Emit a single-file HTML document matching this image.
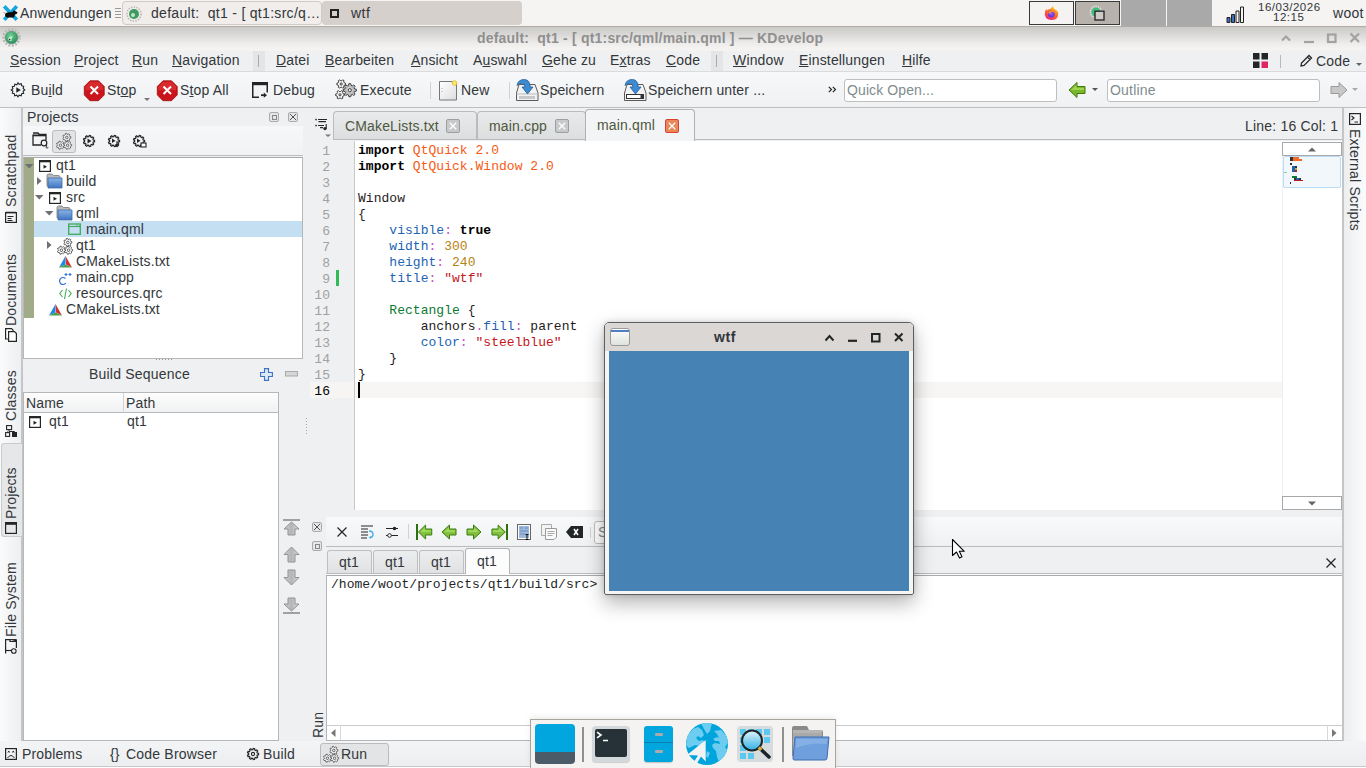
<!DOCTYPE html>
<html><head><meta charset="utf-8">
<style>
*{box-sizing:border-box;margin:0;padding:0}
html,body{width:1366px;height:768px;overflow:hidden;background:#eff0f1;font-family:"Liberation Sans",sans-serif;font-size:14px;color:#33373a}
.a{position:absolute}
.t{position:absolute;white-space:pre;line-height:16px;letter-spacing:0.15px}
.u{text-decoration:underline;text-underline-offset:1px}
.mono{font-family:"Liberation Mono",monospace;font-size:13px;letter-spacing:0.03px}
svg{position:absolute;overflow:visible}
</style></head><body>
<!-- TASKBAR -->
<div class="a" style="left:0;top:0;width:1366px;height:27px;background:#f5f4f2;border-bottom:1px solid #b3aba4"></div>
<svg style="left:2px;top:4px" width="17" height="18" viewBox="0 0 17 18"><path d="M2.2 2.2L14.8 15.8M14.8 2.2L2.2 15.8" stroke="#13a6df" stroke-width="3.6"/><path d="M3 11Q3.3 8.3 7 8.3L10.5 8L11.8 6.2L13 7L15.5 8.3L14.8 9.8L12.8 10.8L12 13.5L6.5 13.6Q3.4 13.6 3 11Z" fill="#0a0a0a"/><path d="M1.5 8.5L3.5 9.3" stroke="#555" stroke-width=".6"/></svg>
<div class="t" style="left:20px;top:5px;letter-spacing:0.2px;color:#31363b">Anwendungen</div>
<svg style="left:115px;top:8px" width="6" height="11"><path d="M0 .5H6M0 3.5H6M0 6.5H6M0 9.5H6" stroke="#999" stroke-width="1"/></svg>
<div class="a" style="left:122px;top:1px;width:200px;height:24px;background:#f0edea;border:1px solid #cfcac5;border-radius:4px"></div>
<svg style="left:126px;top:6px" width="16" height="16" viewBox="0 0 16 16"><circle cx="8" cy="8" r="7" fill="none" stroke="#bbb" stroke-width="1.6" stroke-dasharray="1.5 1.2"/><circle cx="8" cy="8" r="5" fill="#3e9a5f"/><circle cx="7" cy="9" r="2" fill="#bfe6c9"/></svg>
<div class="t" style="left:151px;top:5px;letter-spacing:0.3px;color:#31363b">default:  qt1 - [ qt1:src/q…</div>
<div class="a" style="left:322px;top:1px;width:200px;height:24px;background:#d5d0cc;border-radius:4px"></div>
<div class="a" style="left:330px;top:9px;width:9px;height:9px;border:2px solid #222"></div>
<div class="t" style="left:351px;top:5px;letter-spacing:0.5px;color:#31363b">wtf</div>
<div class="a" style="left:1029px;top:1px;width:45px;height:24px;background:#f5f3f1;border:1px solid #3a3a3a"></div>
<svg style="left:1044px;top:5px" width="15" height="16" viewBox="0 0 15 16"><defs><linearGradient id="gff" x1=".8" y1="0" x2=".3" y2="1"><stop offset="0" stop-color="#ffd91a"/><stop offset=".45" stop-color="#ff7a2a"/><stop offset="1" stop-color="#ef1f7a"/></linearGradient><radialGradient id="gfp" cx=".5" cy=".4" r=".6"><stop offset="0" stop-color="#9a5cff"/><stop offset="1" stop-color="#5a2fd0"/></radialGradient></defs><path d="M9.5 1Q9 3 10 3.8Q14.5 5.5 14.2 9.5Q13.8 15 7.5 15Q1 15 .8 8.8Q.8 5.5 2.5 3.8L3 5.5Q4.5 3.5 6.5 3.7Q8 1.5 9.5 1Z" fill="url(#gff)"/><circle cx="7.3" cy="9" r="3.4" fill="url(#gfp)"/><path d="M4 8Q5 5 8.5 5.5Q10.5 6.3 10.5 8.3Q9.5 6.8 7.5 7Q6 7.3 6.8 8.5Q5 9 4 8Z" fill="#ff8a2a"/></svg>
<div class="a" style="left:1075px;top:1px;width:45px;height:24px;background:#b8b2ad;border:1px solid #3a3a3a"></div>
<svg style="left:1089px;top:5px" width="18" height="17" viewBox="0 0 18 17"><circle cx="7" cy="7" r="5.6" fill="none" stroke="#e4e1de" stroke-width="1.6" stroke-dasharray="1.3 1"/><circle cx="7" cy="7" r="4.5" fill="#3fbf7a"/><rect x="6" y="6.2" width="9" height="8.8" fill="#cfcac6" stroke="#2a2c2e" stroke-width="1.4"/></svg>
<div class="a" style="left:1121px;top:0;width:45px;height:26px;background:#a9a9a9"></div>
<div class="a" style="left:1167px;top:0;width:45px;height:26px;background:#a9a9a9"></div>
<svg style="left:1226px;top:6px" width="18" height="17" viewBox="0 0 18 17"><path d="M1 11.5h3v5h-3z M5.5 8.5h3v8h-3z" fill="#3b6fc2" stroke="#222" stroke-width="1"/><path d="M10 5h3v11.5h-3z M14.5 1h3v15.5h-3z" fill="#f5f3f1" stroke="#222" stroke-width="1"/></svg>
<div class="t" style="left:1258px;top:1px;font-size:11.5px;letter-spacing:0.5px;color:#31363b;line-height:13px">16/03/2026</div>
<div class="t" style="left:1273px;top:11px;font-size:11.5px;letter-spacing:0.5px;color:#31363b;line-height:13px">12:15</div>
<div class="t" style="left:1333px;top:5px;letter-spacing:0.3px;color:#31363b">woot</div>

<!-- TITLE BAR -->
<div class="a" style="left:0;top:27px;width:1366px;height:24px;background:linear-gradient(#c9c9c7,#dcdbd9 35%,#eeedeb 70%,#f4f3f1 90%)"></div>
<svg style="left:2px;top:28px" width="19" height="19" viewBox="0 0 19 19"><defs><radialGradient id="gkd" cx=".4" cy=".35" r=".7"><stop offset="0" stop-color="#6fd08f"/><stop offset="1" stop-color="#2a8a5a"/></radialGradient></defs><circle cx="9.5" cy="9.5" r="8" fill="none" stroke="#b9b9b9" stroke-width="2.6" stroke-dasharray="2 1.4"/><circle cx="9.5" cy="9.5" r="6.3" fill="url(#gkd)" stroke="#4a7a66" stroke-width=".5"/><path d="M6 11.5Q7 7.5 11 8.5Q9 10 9.5 13Q7 13.5 6 11.5Z" fill="#c5ecd2"/><circle cx="7.6" cy="11.6" r=".8" fill="#222"/></svg>
<div class="t" style="left:477px;top:30px;font-weight:bold;color:#8f8f8f;font-size:14px;letter-spacing:0.2px">default:  qt1 - [ qt1:src/qml/main.qml ] — KDevelop</div>
<svg style="left:1280px;top:32px" width="82" height="12"><path d="M2 8.5L6 4.5L10 8.5" stroke="#a2a2a2" stroke-width="2.2" fill="none"/><path d="M24 10H34" stroke="#a2a2a2" stroke-width="2.2"/><rect x="48" y="2.5" width="7.5" height="7.5" stroke="#a2a2a2" stroke-width="2.2" fill="none"/><path d="M70.5 1.5L79 10M79 1.5L70.5 10" stroke="#a2a2a2" stroke-width="2.2"/></svg>

<!-- MENU BAR -->
<div class="a" style="left:0;top:51px;width:1366px;height:21px;background:#eff0f1;border-bottom:1px solid #d9dbdd"></div>
<div class="a" style="left:253px;top:51px;width:12px;height:20px;background:#e3e5e7"></div>
<div class="a" style="left:258px;top:55px;width:1px;height:12px;background:#a8aaac"></div>
<div class="a" style="left:711px;top:51px;width:12px;height:20px;background:#e3e5e7"></div>
<div class="a" style="left:716px;top:55px;width:1px;height:12px;background:#a8aaac"></div>
<div class="t" style="left:10px;top:52px"><span class="u">S</span>ession</div>
<div class="t" style="left:74px;top:52px"><span class="u">P</span>roject</div>
<div class="t" style="left:132px;top:52px"><span class="u">R</span>un</div>
<div class="t" style="left:172px;top:52px"><span class="u">N</span>avigation</div>
<div class="t" style="left:276px;top:52px"><span class="u">D</span>atei</div>
<div class="t" style="left:325px;top:52px"><span class="u">B</span>earbeiten</div>
<div class="t" style="left:411px;top:52px"><span class="u">A</span>nsicht</div>
<div class="t" style="left:473px;top:52px">A<span class="u">u</span>swahl</div>
<div class="t" style="left:542px;top:52px"><span class="u">G</span>ehe zu</div>
<div class="t" style="left:610px;top:52px">E<span class="u">x</span>tras</div>
<div class="t" style="left:666px;top:52px"><span class="u">C</span>ode</div>
<div class="t" style="left:733px;top:52px"><span class="u">W</span>indow</div>
<div class="t" style="left:799px;top:52px"><span class="u">E</span>instellungen</div>
<div class="t" style="left:902px;top:52px"><span class="u">H</span>ilfe</div>
<svg style="left:1253px;top:53px" width="16" height="16"><rect x="0" y="0" width="6.5" height="6.5" fill="#232627"/><rect x="8.5" y="0" width="6.5" height="6.5" fill="#232627"/><rect x="0" y="8.5" width="6.5" height="6.5" fill="#232627"/><rect x="8.5" y="8.5" width="6.5" height="6.5" fill="#e0245e"/></svg>
<div class="a" style="left:1280px;top:55px;width:1px;height:13px;background:#b8babc"></div>
<svg style="left:1299px;top:54px" width="14" height="14" viewBox="0 0 14 14"><path d="M2 12L2.5 9L10 1.5L12.5 4L5 11.5Z M8.5 3L11 5.5" stroke="#232627" stroke-width="1.3" fill="none"/></svg>
<div class="t" style="left:1316px;top:53px">Code</div>
<svg style="left:1356px;top:63px" width="8" height="5"><path d="M0 0H6L3 3Z" fill="#666"/></svg>

<!-- TOOLBAR -->
<div class="a" style="left:0;top:72px;width:1366px;height:36px;background:linear-gradient(#f7f8f9,#eff1f2);border-bottom:1px solid #bcbec0"></div>
<svg style="left:10px;top:82px" width="16" height="16" viewBox="0 0 16 16"><path d="M8 .8l1.3 1.6 2-.6.4 2 2 .5-.6 2L14.8 8l-1.7 1.3.6 2-2 .4-.5 2-2-.6L8 14.8l-1.3-1.7-2 .6-.4-2-2-.5.6-2L1.2 8l1.7-1.3-.6-2 2-.4.5-2 2 .6Z" fill="none" stroke="#232627" stroke-width="1.1"/><path d="M6.3 5.2L10.8 8L6.3 10.8Z" fill="#232627"/></svg>
<div class="t" style="left:31px;top:82px">Bu<span class="u">i</span>ld</div>
<svg style="left:84px;top:80px" width="21" height="21" viewBox="0 0 21 21"><path d="M6 .8h8.5l5.7 5.7v8.5L14.5 20.7H6L.3 15V6.5Z" fill="#c9151b" stroke="#9c0d10" stroke-width=".8"/><path d="M6.3 1.8h7.9l5 5v3.5H1.3V6.8Z" fill="#e23a3a" opacity=".6"/><path d="M6.5 6.5L14 14M14 6.5L6.5 14" stroke="#fff" stroke-width="2"/></svg>
<div class="t" style="left:107px;top:82px">St<span class="u">o</span>p</div>
<svg style="left:144px;top:98px" width="7" height="4"><path d="M0 0H6L3 3Z" fill="#777"/></svg>
<svg style="left:157px;top:80px" width="21" height="21" viewBox="0 0 21 21"><path d="M6 .8h8.5l5.7 5.7v8.5L14.5 20.7H6L.3 15V6.5Z" fill="#c9151b" stroke="#9c0d10" stroke-width=".8"/><path d="M6.3 1.8h7.9l5 5v3.5H1.3V6.8Z" fill="#e23a3a" opacity=".6"/><path d="M6.5 6.5L14 14M14 6.5L6.5 14" stroke="#fff" stroke-width="2"/></svg>
<div class="t" style="left:180px;top:82px">S<span class="u">t</span>op All</div>
<svg style="left:252px;top:82px" width="16" height="16" viewBox="0 0 16 16"><rect x="0" y="0" width="16" height="3.2" fill="#232627"/><path d="M.75 3V15.25H7M15.25 3V10.5" fill="none" stroke="#232627" stroke-width="1.5"/><path d="M9 13.2H12.5" stroke="#232627" stroke-width="1.8"/><path d="M11.8 10.6L15 13.2L11.8 15.8Z" fill="#232627"/></svg>
<div class="t" style="left:273px;top:82px">Debug</div>
<svg style="left:335px;top:79px" width="22" height="21" viewBox="0 0 22 21"><defs><radialGradient id="gex" cx=".5" cy=".5" r=".6"><stop offset="0" stop-color="#f0f0f0"/><stop offset=".5" stop-color="#b8b8b8"/><stop offset="1" stop-color="#e6e6e6"/></radialGradient></defs><g stroke="#2a2a2a" stroke-width=".9" stroke-linejoin="round" fill-rule="evenodd"><path d="M10.52 4.18L10.52 5.82L9.32 6.09L8.70 7.16L9.08 8.33L7.65 9.16L6.82 8.24L5.58 8.24L4.75 9.16L3.32 8.33L3.70 7.16L3.08 6.09L1.88 5.82L1.88 4.18L3.08 3.91L3.70 2.84L3.32 1.67L4.75 0.84L5.58 1.76L6.82 1.76L7.65 0.84L9.08 1.67L8.70 2.84L9.32 3.91ZM7.30 5.00A1.1 1.1 0 1 0 5.10 5.00A1.1 1.1 0 1 0 7.30 5.00Z" fill="#f6f6f6"/><path d="M9.32 14.98L9.32 16.62L8.12 16.89L7.50 17.96L7.88 19.13L6.45 19.96L5.62 19.04L4.38 19.04L3.55 19.96L2.12 19.13L2.50 17.96L1.88 16.89L0.68 16.62L0.68 14.98L1.88 14.71L2.50 13.64L2.12 12.47L3.55 11.64L4.38 12.56L5.62 12.56L6.45 11.64L7.88 12.47L7.50 13.64L8.12 14.71ZM6.10 15.80A1.1 1.1 0 1 0 3.90 15.80A1.1 1.1 0 1 0 6.10 15.80Z" fill="#f6f6f6"/><path d="M21.33 10.27L21.33 12.13L19.64 12.44L19.10 13.75L20.08 15.16L18.76 16.48L17.35 15.50L16.04 16.04L15.73 17.73L13.87 17.73L13.56 16.04L12.25 15.50L10.84 16.48L9.52 15.16L10.50 13.75L9.96 12.44L8.27 12.13L8.27 10.27L9.96 9.96L10.50 8.65L9.52 7.24L10.84 5.92L12.25 6.90L13.56 6.36L13.87 4.67L15.73 4.67L16.04 6.36L17.35 6.90L18.76 5.92L20.08 7.24L19.10 8.65L19.64 9.96ZM16.40 11.20A1.6 1.6 0 1 0 13.20 11.20A1.6 1.6 0 1 0 16.40 11.20Z" fill="url(#gex)"/></g></svg>
<div class="t" style="left:360px;top:82px">Execute</div>
<div class="a" style="left:430px;top:82px;width:1px;height:17px;background:#d0d2d4"></div>
<svg style="left:439px;top:80px" width="19" height="21" viewBox="0 0 19 21"><path d="M.5 1.5h14.5l2.5 2.5v16H.5Z" fill="url(#gnew)" stroke="#777" stroke-width="1"/><defs><linearGradient id="gnew" x1="0" y1="0" x2="1" y2="1"><stop offset="0" stop-color="#fff"/><stop offset="1" stop-color="#ddd"/></linearGradient></defs><circle cx="15.5" cy="3" r="2.3" fill="#ffe66d" stroke="#e0c020" stroke-width=".8"/><path d="M3 8v.8M3 11v.8" stroke="#999"/></svg>
<div class="t" style="left:461px;top:82px">New</div>
<div class="a" style="left:509px;top:82px;width:1px;height:17px;background:#d0d2d4"></div>
<svg style="left:516px;top:79px" width="23" height="22" viewBox="0 0 23 22"><path d="M3 5.5H19L22 14V21.5H.5V14Z" fill="#f2f2f2" stroke="#5a5a5a" stroke-width="1"/><path d="M.5 15H22" stroke="#bbb"/><rect x="3" y="17" width="16" height="3" fill="#c9c9c9"/><path d="M1 6.5Q2 .3 8.5.5Q14 .8 14.2 8H17L11.5 15L6 8H8.8Q8.8 4.2 6 4.2Q3 4.2 1 6.5Z" fill="#3f8bd3" stroke="#215f9c" stroke-width=".8"/></svg>
<div class="t" style="left:540px;top:82px">Speichern</div>
<svg style="left:624px;top:79px" width="23" height="22" viewBox="0 0 23 22"><path d="M3 5.5H19L22 14V21.5H.5V14Z" fill="#f2f2f2" stroke="#5a5a5a" stroke-width="1"/><rect x="2.5" y="15.5" width="17" height="4" fill="#fff" stroke="#333" stroke-width="1"/><rect x="16.5" y="15.5" width="3" height="4" fill="#333"/><path d="M1 6.5Q2 .3 8.5.5Q14 .8 14.2 8H17L11.5 15L6 8H8.8Q8.8 4.2 6 4.2Q3 4.2 1 6.5Z" fill="#3f8bd3" stroke="#215f9c" stroke-width=".8"/></svg>
<div class="t" style="left:648px;top:82px">Speichern unter ...</div>
<svg style="left:828px;top:86px" width="9" height="7" viewBox="0 0 9 7"><path d="M.8 .8L3.5 3.5L.8 6.2M4.8 .8L7.5 3.5L4.8 6.2" fill="none" stroke="#232627" stroke-width="1.2"/></svg>
<div class="a" style="left:844px;top:79px;width:213px;height:23px;background:#fff;border:1px solid #bcbebf;border-radius:3px"></div>
<div class="t" style="left:847px;top:82px;color:#7f8c8d;letter-spacing:0.1px">Quick Open...</div>
<svg style="left:1068px;top:81px" width="18" height="18" viewBox="0 0 18 18"><path d="M1 9L9 1.5V5.5H17V12.5H9V16.5Z" fill="#78b82a" stroke="#3e7a10" stroke-width="1"/><path d="M3 9L8.5 4V7H16V9Z" fill="#b0e060" opacity=".7"/></svg>
<svg style="left:1092px;top:88px" width="7" height="4"><path d="M0 0H6L3 3Z" fill="#555"/></svg>
<div class="a" style="left:1107px;top:79px;width:213px;height:23px;background:#fff;border:1px solid #bcbebf;border-radius:3px"></div>
<div class="t" style="left:1110px;top:82px;color:#7f8c8d;letter-spacing:0.2px">Outline</div>
<svg style="left:1330px;top:81px" width="18" height="18" viewBox="0 0 18 18"><path d="M17 9L9 1.5V5.5H1V12.5H9V16.5Z" fill="#c8c8c8" stroke="#9a9a9a" stroke-width="1"/></svg>
<svg style="left:1352px;top:88px" width="7" height="4"><path d="M0 0H6L3 3Z" fill="#aaa"/></svg>

<!-- LEFT SIDEBAR -->
<svg width="0" height="0"><defs><linearGradient id="gfold" x1="0" y1="0" x2="0" y2="1"><stop offset="0" stop-color="#8bb4e6"/><stop offset="1" stop-color="#3f74c0"/></linearGradient></defs></svg>
<div class="a" style="left:0;top:108px;width:22px;height:634px;background:linear-gradient(90deg,#fbfbfc,#eceeef)"></div>
<div class="a" style="left:21px;top:108px;width:2px;height:634px;background:#c3c5c7"></div>
<div class="a" style="left:1px;top:443px;width:21px;height:94px;background:#e6e7e8;border:1px solid #c9cbcd;border-right:none;border-radius:3px 0 0 3px"></div>
<div class="t" style="left:3px;top:207px;transform:rotate(-90deg);transform-origin:0 0;">Scratchpad</div>
<svg style="left:5px;top:211px" width="12" height="12" viewBox="0 0 12 12"><rect x=".6" y="1.6" width="10.8" height="9.8" fill="none" stroke="#232627" stroke-width="1.2"/><path d="M2 .5v2M4 .5v2M6 .5v2M8 .5v2M10 .5v2" stroke="#232627"/><path d="M2.5 5.5h6M2.5 7.5h4M2.5 9.5h5" stroke="#232627"/></svg>
<div class="t" style="left:3px;top:326px;transform:rotate(-90deg);transform-origin:0 0;">Documents</div>
<svg style="left:5px;top:328px" width="12" height="14" viewBox="0 0 12 14"><path d="M.6 .6H6.5L8 2V11H.6Z" fill="#fff" stroke="#232627" stroke-width="1.2"/><path d="M3.6 3.6H9.5L11.4 5.5V13.4H3.6Z" fill="#fff" stroke="#232627" stroke-width="1.2"/></svg>
<div class="t" style="left:3px;top:421px;transform:rotate(-90deg);transform-origin:0 0;">Classes</div>
<svg style="left:5px;top:425px" width="12" height="12" viewBox="0 0 12 12"><rect x="1.6" y=".6" width="5" height="4" fill="none" stroke="#232627" stroke-width="1.1"/><rect x=".6" y="7.6" width="4" height="3.8" fill="none" stroke="#232627" stroke-width="1.1"/><rect x="7" y="7" width="5" height="5" fill="#232627"/><path d="M4 4.6V6.5H9.5V7M2.6 6.5V7.6" stroke="#232627" fill="none"/></svg>
<div class="t" style="left:3px;top:519px;transform:rotate(-90deg);transform-origin:0 0;">Projects</div>
<svg style="left:5px;top:522px" width="12" height="12" viewBox="0 0 12 12"><rect x=".6" y=".6" width="10.8" height="10.8" fill="none" stroke="#232627" stroke-width="1.2"/><rect x="0" y="0" width="12" height="2.8" fill="#232627"/></svg>
<div class="t" style="left:3px;top:637px;transform:rotate(-90deg);transform-origin:0 0;">File System</div>
<svg style="left:5px;top:639px" width="12" height="15" viewBox="0 0 12 15"><path d="M.6 14.4V.6H5V2.5H11.4V9" fill="none" stroke="#232627" stroke-width="1.2"/><path d="M5 .6H11.4V2.5" fill="#232627" stroke="#232627"/><path d="M.6 11.5H6" stroke="#232627" stroke-width="1.2"/><circle cx="8.8" cy="12" r="2.3" fill="none" stroke="#232627" stroke-width="1.1"/></svg>

<!-- PROJECTS PANEL -->
<div class="t" style="left:27px;top:109px">Projects</div>
<div class="a" style="left:269px;top:112px;width:10px;height:10px;border:1px solid #a8aaac;border-radius:2px;background:#e4e6e8"></div>
<div class="a" style="left:272px;top:115px;width:5px;height:5px;border:1px solid #888"></div>
<div class="a" style="left:288px;top:112px;width:10px;height:10px;border:1px solid #a8aaac;border-radius:2px;background:#e4e6e8"></div>
<svg style="left:289px;top:113px" width="8" height="8"><path d="M1 1L7 7M7 1L1 7" stroke="#555" stroke-width="1"/></svg>
<div class="a" style="left:23px;top:126px;width:280px;height:30px;background:linear-gradient(#f6f7f8,#f1f2f3);border-bottom:1px solid #babcbe"></div><div class="a" style="left:23px;top:156px;width:280px;height:1px;background:#eff0f1"></div>
<svg style="left:32px;top:131px" width="18" height="18" viewBox="0 0 18 18"><path d="M1 3.5V14H9" fill="none" stroke="#232627" stroke-width="1.3"/><path d="M1 2h5l1.2 1.5H14V9" fill="none" stroke="#232627" stroke-width="1.3"/><rect x="1" y="3.5" width="13" height="1.8" fill="#232627"/><circle cx="12" cy="12" r="2.8" fill="none" stroke="#232627" stroke-width="1.2"/><path d="M13.5 14L15 15.5" stroke="#232627" stroke-width="1.3"/><path d="M13 16H17L15 18Z" fill="#777"/></svg>
<div class="a" style="left:52px;top:130px;width:24px;height:23px;background:#e3e4e5;border:1px solid #b9bbbd;border-radius:3px"></div>
<svg style="left:56px;top:133px" width="17" height="17" viewBox="0 0 17 17"><g fill="#f4f4f4" stroke="#444" stroke-width=".75" stroke-linejoin="round" fill-rule="evenodd"><path d="M14.85 3.74L14.85 5.06L13.77 5.28L13.34 6.18L13.84 7.15L12.81 7.97L11.97 7.27L10.99 7.49L10.54 8.49L9.26 8.20L9.28 7.10L8.50 6.48L7.44 6.75L6.87 5.56L7.74 4.90L7.74 3.90L6.87 3.24L7.44 2.05L8.50 2.32L9.28 1.70L9.26 0.60L10.54 0.31L10.99 1.31L11.97 1.53L12.81 0.83L13.84 1.65L13.34 2.62L13.77 3.52ZM12.10 4.40A1.3 1.3 0 1 0 9.50 4.40A1.3 1.3 0 1 0 12.10 4.40Z"/><path d="M8.45 11.54L8.45 12.86L7.37 13.08L6.94 13.98L7.44 14.95L6.41 15.77L5.57 15.07L4.59 15.29L4.14 16.29L2.86 16.00L2.88 14.90L2.10 14.28L1.04 14.55L0.47 13.36L1.34 12.70L1.34 11.70L0.47 11.04L1.04 9.85L2.10 10.12L2.88 9.50L2.86 8.40L4.14 8.11L4.59 9.11L5.57 9.33L6.41 8.63L7.44 9.45L6.94 10.42L7.37 11.32ZM5.70 12.20A1.3 1.3 0 1 0 3.10 12.20A1.3 1.3 0 1 0 5.70 12.20Z"/><path d="M15.65 11.54L15.65 12.86L14.57 13.08L14.14 13.98L14.64 14.95L13.61 15.77L12.77 15.07L11.79 15.29L11.34 16.29L10.06 16.00L10.08 14.90L9.30 14.28L8.24 14.55L7.67 13.36L8.54 12.70L8.54 11.70L7.67 11.04L8.24 9.85L9.30 10.12L10.08 9.50L10.06 8.40L11.34 8.11L11.79 9.11L12.77 9.33L13.61 8.63L14.64 9.45L14.14 10.42L14.57 11.32ZM12.90 12.20A1.3 1.3 0 1 0 10.30 12.20A1.3 1.3 0 1 0 12.90 12.20Z"/></g></svg>
<svg style="left:83px;top:135px" width="13" height="13" viewBox="0 0 13 13"><path d="M11.56 5.30L11.56 6.70L10.29 6.97L9.91 8.01L10.71 9.03L9.80 10.11L8.66 9.50L7.71 10.06L7.66 11.35L6.27 11.59L5.79 10.39L4.70 10.20L3.83 11.16L2.61 10.46L3.01 9.23L2.30 8.38L1.02 8.56L0.54 7.24L1.63 6.55L1.63 5.45L0.54 4.76L1.02 3.44L2.30 3.62L3.01 2.77L2.61 1.54L3.83 0.84L4.70 1.80L5.79 1.61L6.27 0.41L7.66 0.65L7.71 1.94L8.66 2.50L9.80 1.89L10.71 2.97L9.91 3.99L10.29 5.03Z" fill="none" stroke="#232627" stroke-width="1.2"/><path d="M4.5 3.5L8.5 6L4.5 8.5Z" fill="#232627"/></svg>
<svg style="left:108px;top:135px" width="13" height="13" viewBox="0 0 13 13"><path d="M11.56 5.30L11.56 6.70L10.29 6.97L9.91 8.01L10.71 9.03L9.80 10.11L8.66 9.50L7.71 10.06L7.66 11.35L6.27 11.59L5.79 10.39L4.70 10.20L3.83 11.16L2.61 10.46L3.01 9.23L2.30 8.38L1.02 8.56L0.54 7.24L1.63 6.55L1.63 5.45L0.54 4.76L1.02 3.44L2.30 3.62L3.01 2.77L2.61 1.54L3.83 0.84L4.70 1.80L5.79 1.61L6.27 0.41L7.66 0.65L7.71 1.94L8.66 2.50L9.80 1.89L10.71 2.97L9.91 3.99L10.29 5.03Z" fill="none" stroke="#232627" stroke-width="1.2"/><path d="M4 3.5L7.5 5.7L4 8Z" fill="#232627"/><path d="M9 6V11.5M7.2 9.8L9 11.7L10.8 9.8" stroke="#232627" fill="none" stroke-width="1.1"/></svg>
<svg style="left:133px;top:135px" width="14" height="13" viewBox="0 0 14 13"><path d="M11.56 5.30L11.56 6.70L10.29 6.97L9.91 8.01L10.71 9.03L9.80 10.11L8.66 9.50L7.71 10.06L7.66 11.35L6.27 11.59L5.79 10.39L4.70 10.20L3.83 11.16L2.61 10.46L3.01 9.23L2.30 8.38L1.02 8.56L0.54 7.24L1.63 6.55L1.63 5.45L0.54 4.76L1.02 3.44L2.30 3.62L3.01 2.77L2.61 1.54L3.83 0.84L4.70 1.80L5.79 1.61L6.27 0.41L7.66 0.65L7.71 1.94L8.66 2.50L9.80 1.89L10.71 2.97L9.91 3.99L10.29 5.03Z" fill="none" stroke="#232627" stroke-width="1.2"/><path d="M4 3.5L7.5 5.7L4 8Z" fill="#232627"/><rect x="8" y="8" width="5" height="4" fill="#fff" stroke="#232627" stroke-width="1.1"/></svg>
<div class="a" style="left:23px;top:157px;width:280px;height:202px;background:#fff;border:1px solid #b5b7b9;border-top-color:#a8aaac"></div>
<div class="a" style="left:24px;top:158px;width:10px;height:160px;background:#a2ab88"></div>
<div class="a" style="left:34px;top:221px;width:268px;height:16px;background:#c4def2"></div>
<svg style="left:25px;top:164px" width="9" height="5"><path d="M0 0H8.5L4.25 4.5Z" fill="#6e7072"/></svg>
<svg style="left:39px;top:160px" width="12" height="12" viewBox="0 0 12 12"><rect x=".6" y=".6" width="10.8" height="10.8" fill="#fff" stroke="#232627" stroke-width="1.2"/><rect x="0" y="0" width="12" height="2.3" fill="#232627"/><path d="M4.5 4.8L8 6.8L4.5 8.8Z" fill="#232627"/></svg>
<div class="t" style="left:56px;top:157px">qt1</div>
<svg style="left:37px;top:177px" width="5" height="8"><path d="M0 0L4.5 4L0 8Z" fill="#6e7072"/></svg>
<svg style="left:46px;top:173px" width="17" height="16" viewBox="0 0 17 16"><path d="M1 2.5Q1 1 2.5 1H6L7.5 2.5H12.5Q14 2.5 14 4V13H1Z" fill="#b9b9b9" stroke="#777" stroke-width=".8"/><path d="M2 5H16V15H2Z" fill="url(#gfold)" stroke="#3a6aa8" stroke-width=".8"/></svg>
<div class="t" style="left:66px;top:173px">build</div>
<svg style="left:35px;top:195px" width="9" height="5"><path d="M0 0H8.5L4.25 4.5Z" fill="#6e7072"/></svg>
<svg style="left:49px;top:192px" width="12" height="12" viewBox="0 0 12 12"><rect x=".6" y=".6" width="10.8" height="10.8" fill="#fff" stroke="#232627" stroke-width="1.2"/><rect x="0" y="0" width="12" height="2.3" fill="#232627"/><path d="M4.5 4.8L8 6.8L4.5 8.8Z" fill="#232627"/></svg>
<div class="t" style="left:66px;top:189px">src</div>
<svg style="left:45px;top:211px" width="9" height="5"><path d="M0 0H8.5L4.25 4.5Z" fill="#6e7072"/></svg>
<svg style="left:56px;top:205px" width="17" height="16" viewBox="0 0 17 16"><path d="M1 2.5Q1 1 2.5 1H6L7.5 2.5H12.5Q14 2.5 14 4V13H1Z" fill="#b9b9b9" stroke="#777" stroke-width=".8"/><path d="M2 5H16V15H2Z" fill="url(#gfold)" stroke="#3a6aa8" stroke-width=".8"/></svg>
<div class="t" style="left:76px;top:205px">qml</div>
<svg style="left:68px;top:223px" width="13" height="12" viewBox="0 0 13 12"><rect x=".7" y="1" width="11.6" height="10.3" fill="none" stroke="#41a95a" stroke-width="1.3"/><path d="M.7 3.5H12.3" stroke="#41a95a" stroke-width="1.1"/><path d="M8 2.2h.8M9.5 2.2h.8M11 2.2h.5" stroke="#41a95a"/></svg>
<div class="t" style="left:86px;top:221px">main.qml</div>
<svg style="left:47px;top:241px" width="5" height="8"><path d="M0 0L4.5 4L0 8Z" fill="#6e7072"/></svg>
<svg style="left:57px;top:238px" width="17" height="17" viewBox="0 0 17 17"><g fill="#fff" stroke="#333" stroke-width=".75" stroke-linejoin="round" fill-rule="evenodd"><path d="M14.85 3.74L14.85 5.06L13.77 5.28L13.34 6.18L13.84 7.15L12.81 7.97L11.97 7.27L10.99 7.49L10.54 8.49L9.26 8.20L9.28 7.10L8.50 6.48L7.44 6.75L6.87 5.56L7.74 4.90L7.74 3.90L6.87 3.24L7.44 2.05L8.50 2.32L9.28 1.70L9.26 0.60L10.54 0.31L10.99 1.31L11.97 1.53L12.81 0.83L13.84 1.65L13.34 2.62L13.77 3.52ZM12.10 4.40A1.3 1.3 0 1 0 9.50 4.40A1.3 1.3 0 1 0 12.10 4.40Z"/><path d="M8.45 11.54L8.45 12.86L7.37 13.08L6.94 13.98L7.44 14.95L6.41 15.77L5.57 15.07L4.59 15.29L4.14 16.29L2.86 16.00L2.88 14.90L2.10 14.28L1.04 14.55L0.47 13.36L1.34 12.70L1.34 11.70L0.47 11.04L1.04 9.85L2.10 10.12L2.88 9.50L2.86 8.40L4.14 8.11L4.59 9.11L5.57 9.33L6.41 8.63L7.44 9.45L6.94 10.42L7.37 11.32ZM5.70 12.20A1.3 1.3 0 1 0 3.10 12.20A1.3 1.3 0 1 0 5.70 12.20Z"/><path d="M15.65 11.54L15.65 12.86L14.57 13.08L14.14 13.98L14.64 14.95L13.61 15.77L12.77 15.07L11.79 15.29L11.34 16.29L10.06 16.00L10.08 14.90L9.30 14.28L8.24 14.55L7.67 13.36L8.54 12.70L8.54 11.70L7.67 11.04L8.24 9.85L9.30 10.12L10.08 9.50L10.06 8.40L11.34 8.11L11.79 9.11L12.77 9.33L13.61 8.63L14.64 9.45L14.14 10.42L14.57 11.32ZM12.90 12.20A1.3 1.3 0 1 0 10.30 12.20A1.3 1.3 0 1 0 12.90 12.20Z"/></g></svg>
<div class="t" style="left:76px;top:237px">qt1</div>
<svg style="left:59px;top:256px" width="13" height="12" viewBox="0 0 13 12"><path d="M6.5 0L0 11.5L6.5 8.5Z" fill="#1e88e5"/><path d="M6.5 0L13 11.5L7 8.5Z" fill="#d32f2f"/><path d="M0 11.5L6.5 8.5L13 11.5Z" fill="#43a047"/></svg>
<div class="t" style="left:76px;top:253px">CMakeLists.txt</div>
<svg style="left:59px;top:271px" width="13" height="13" viewBox="0 0 13 13"><path d="M6.5 7.5A3.5 3.5 0 1 0 6.8 12.2" fill="none" stroke="#2f6fe0" stroke-width="1.2"/><path d="M5.5 3.5h3M7 2v3M9.5 3.5h3M11 2v3" stroke="#2f6fe0" stroke-width="1.1"/></svg>
<div class="t" style="left:76px;top:269px">main.cpp</div>
<svg style="left:59px;top:287px" width="13" height="13" viewBox="0 0 13 13"><path d="M3.5 3L.8 6.5L3.5 10M9.5 3L12.2 6.5L9.5 10M7.5 1.5L5.5 12" fill="none" stroke="#41a95a" stroke-width="1.1"/></svg>
<div class="t" style="left:76px;top:285px">resources.qrc</div>
<svg style="left:49px;top:304px" width="13" height="12" viewBox="0 0 13 12"><path d="M6.5 0L0 11.5L6.5 8.5Z" fill="#1e88e5"/><path d="M6.5 0L13 11.5L7 8.5Z" fill="#d32f2f"/><path d="M0 11.5L6.5 8.5L13 11.5Z" fill="#43a047"/></svg>
<div class="t" style="left:66px;top:301px">CMakeLists.txt</div>

<!-- splitter dots -->
<svg style="left:156px;top:359px" width="16" height="2"><path d="M0 .5H16" stroke="#999" stroke-dasharray="1 2"/></svg>
<!-- BUILD SEQUENCE -->
<div class="t" style="left:89px;top:366px;letter-spacing:0.2px">Build Sequence</div>
<svg style="left:260px;top:368px" width="13" height="13" viewBox="0 0 13 13"><path d="M4.5 .6H8.5V4.5H12.4V8.5H8.5V12.4H4.5V8.5H.6V4.5H4.5Z" fill="#dbe8f7" stroke="#3b72c4" stroke-width="1.1"/></svg>
<svg style="left:285px;top:371px" width="13" height="6"><rect x=".5" y=".5" width="12" height="4.5" fill="#d6d6d6" stroke="#aaa"/></svg>
<div class="a" style="left:23px;top:392px;width:256px;height:349px;background:#fff;border:1px solid #b5b7b9"></div>
<div class="a" style="left:24px;top:393px;width:254px;height:20px;background:linear-gradient(#fdfdfd,#f0f1f2);border-bottom:1px solid #b5b7b9"></div>
<div class="a" style="left:123px;top:393px;width:1px;height:20px;background:#d0d2d4"></div>
<div class="t" style="left:26px;top:395px">Name</div>
<div class="t" style="left:126px;top:395px">Path</div>
<svg style="left:29px;top:416px" width="12" height="12" viewBox="0 0 12 12"><rect x=".6" y=".6" width="10.8" height="10.8" fill="#fff" stroke="#232627" stroke-width="1.2"/><rect x="0" y="0" width="12" height="2.3" fill="#232627"/><path d="M4.5 4.8L8 6.8L4.5 8.8Z" fill="#232627"/></svg>
<div class="t" style="left:49px;top:413px">qt1</div>
<div class="t" style="left:127px;top:413px">qt1</div>
<svg style="left:306px;top:418px" width="2" height="16"><path d="M.5 0V16" stroke="#aaa" stroke-dasharray="1 2"/></svg>
<!-- EDITOR -->
<svg style="left:315px;top:118px" width="17" height="20" viewBox="0 0 17 20"><rect x=".3" y=".8" width="1.5" height="1.5" fill="#232627"/><rect x=".3" y="6.8" width="1.5" height="1.5" fill="#232627"/><path d="M3 1.5H12M3.5 3.6H11M3 7.5H9M5 9.6H8" stroke="#232627" stroke-width="1.1"/><circle cx="10" cy="10.6" r="1.7" fill="#232627"/><path d="M11.2 10.6V6" stroke="#232627" stroke-width="1.1"/><path d="M10 16.5H16L13 19Z" fill="#777"/></svg>
<div class="a" style="left:333px;top:111px;width:144px;height:29px;background:linear-gradient(#e9eaeb,#dcdddf);border:1px solid #b9bbbd;border-bottom:none;border-radius:4px 4px 0 0"></div>
<div class="t" style="left:345px;top:118px;color:#4d5840">CMakeLists.txt</div>
<div class="a" style="left:446px;top:119px;width:14px;height:14px;background:#c8c9ca;border:1px solid #9c9ea0;border-radius:2px"></div><svg style="left:449px;top:122px" width="8" height="8"><path d="M.8 .8L7.2 7.2M7.2 .8L.8 7.2" stroke="#fff" stroke-width="1.3"/></svg>

<div class="a" style="left:477px;top:111px;width:109px;height:29px;background:linear-gradient(#e9eaeb,#dcdddf);border:1px solid #b9bbbd;border-bottom:none;border-radius:4px 4px 0 0"></div>
<div class="t" style="left:489px;top:118px;color:#4d5840">main.cpp</div>
<div class="a" style="left:555px;top:119px;width:14px;height:14px;background:#c8c9ca;border:1px solid #9c9ea0;border-radius:2px"></div><svg style="left:558px;top:122px" width="8" height="8"><path d="M.8 .8L7.2 7.2M7.2 .8L.8 7.2" stroke="#fff" stroke-width="1.3"/></svg>

<div class="a" style="left:585px;top:109px;width:110px;height:32px;background:#f3f4f5;border:1px solid #aeb0b2;border-bottom:none;border-radius:4px 4px 0 0"></div>
<div class="t" style="left:597px;top:117px;color:#4d5840">main.qml</div>
<div class="a" style="left:665px;top:119px;width:14px;height:14px;background:#e8875a;border:1px solid #d9432f;border-radius:2px"></div><svg style="left:668px;top:122px" width="8" height="8"><path d="M.8 .8L7.2 7.2M7.2 .8L.8 7.2" stroke="#fff" stroke-width="1.3"/></svg>

<div class="a" style="left:333px;top:139px;width:1010px;height:1px;background:#b9bbbd"></div>
<div class="a" style="left:586px;top:139px;width:108px;height:2px;background:#f3f4f5"></div>
<div class="t" style="left:1245px;top:118px;letter-spacing:0.2px">Line: 16 Col: 1</div>
<div class="a" style="left:310px;top:141px;width:1033px;height:369px;background:#fff"></div>
<div class="a" style="left:310px;top:141px;width:44px;height:369px;background:#eff0f1"></div>
<div class="a" style="left:354px;top:141px;width:1px;height:369px;background:#c6c8ca"></div>
<div class="a" style="left:310px;top:382px;width:44px;height:16px;background:#f6f5f3"></div>
<div class="a" style="left:355px;top:382px;width:927px;height:16px;background:#f7f6f4"></div>
<div class="a" style="left:336px;top:270px;width:3px;height:16px;background:#2ebd55"></div>
<div class="a" style="left:358px;top:382px;width:2px;height:16px;background:#000"></div>
<div class="a mono" style="left:314px;top:144px;width:16px;line-height:16px;color:#a0a1a2;text-align:right;white-space:pre">1
2
3
4
5
6
7
8
9
10
11
12
13
14
15
<span style="color:#000">16</span></div>
<style>.p{color:#1d63b4}.c{color:#c64fd1}.n{color:#b48310}.s{color:#c4161c}</style>
<div class="a mono" style="left:358px;top:143px;line-height:16px;color:#1f1c1b;white-space:pre"><b style="color:#000">import</b> <span style="color:#f55a14">QtQuick 2.0</span>
<b style="color:#000">import</b> <span style="color:#f55a14">QtQuick.Window 2.0</span>

Window
{
    <span class="p">visible</span><span class="c">:</span> <b style="color:#000">true</b>
    <span class="p">width</span><span class="c">:</span> <span class="n">300</span>
    <span class="p">height</span><span class="c">:</span> <span class="n">240</span>
    <span class="p">title</span><span class="c">:</span> <span class="s">"wtf"</span>

    <span style="color:#0b7a31">Rectangle</span> {
        anchors<span class="c">.</span><span class="p">fill</span><span class="c">:</span> parent
        <span class="p">color</span><span class="c">:</span> <span class="s">"steelblue"</span>
    }
}
</div>

<!-- minimap -->
<div class="a" style="left:1282px;top:156px;width:1px;height:340px;background:#eef0f1"></div>
<div class="a" style="left:1282px;top:142px;width:60px;height:14px;background:#fff;border:1px solid #a6a8aa"></div>
<svg style="left:1308px;top:147px" width="8" height="5"><path d="M0 4.5L4 .5L8 4.5Z" fill="#666"/></svg>
<div class="a" style="left:1283px;top:156px;width:58px;height:32px;background:#f2f7fc;border:1px solid #b9dbf5;border-radius:2px"></div>
<div class="a" style="left:1290px;top:157px;width:3px;height:4px;background:#333"></div>
<div class="a" style="left:1293px;top:157px;width:6px;height:4px;background:#f36a25"></div>
<div class="a" style="left:1299px;top:159px;width:3px;height:2px;background:#f36a25"></div>
<div class="a" style="left:1290px;top:163px;width:2px;height:2px;background:#333"></div>
<div class="a" style="left:1292px;top:166px;width:3px;height:6px;background:#1d63b4"></div>
<div class="a" style="left:1295px;top:166px;width:2px;height:2px;background:#333"></div>
<div class="a" style="left:1295px;top:168px;width:2px;height:2px;background:#d6a530"></div>
<div class="a" style="left:1295px;top:170px;width:2px;height:2px;background:#c4161c"></div>
<div class="a" style="left:1284px;top:172px;width:3px;height:1px;background:#8fd0a0"></div>
<div class="a" style="left:1292px;top:176px;width:5px;height:2px;background:#0b7a31"></div>
<div class="a" style="left:1294px;top:178px;width:7px;height:2px;background:#333"></div>
<div class="a" style="left:1296px;top:178px;width:3px;height:2px;background:#1d63b4"></div>
<div class="a" style="left:1294px;top:180px;width:9px;height:1px;background:#c4161c"></div>
<div class="a" style="left:1290px;top:182px;width:1px;height:2px;background:#333"></div>
<div class="a" style="left:1282px;top:496px;width:60px;height:14px;background:#fff;border:1px solid #a6a8aa"></div>
<svg style="left:1308px;top:501px" width="8" height="5"><path d="M0 .5L4 4.5L8 .5Z" fill="#666"/></svg>

<!-- left-middle column (arrows) -->
<svg style="left:283px;top:519px" width="17" height="17" viewBox="0 0 17 17"><defs><linearGradient id="garr" x1="0" y1="0" x2="1" y2="0"><stop offset="0" stop-color="#cfcfcf"/><stop offset=".5" stop-color="#b5b5b5"/><stop offset="1" stop-color="#dcdcdc"/></linearGradient></defs><path d="M0 1H17" stroke="#8c8c8c" stroke-width="1.6"/><path d="M8.5 3L16 10H12V16H5V10H1Z" fill="url(#garr)" stroke="#929292" stroke-width="1"/></svg>
<svg style="left:283px;top:546px" width="17" height="17" viewBox="0 0 17 17"><path d="M8.5 1L16 8.5H12V16H5V8.5H1Z" fill="url(#garr)" stroke="#929292" stroke-width="1"/></svg>
<svg style="left:283px;top:569px" width="17" height="17" viewBox="0 0 17 17"><path d="M8.5 16L16 8.5H12V1H5V8.5H1Z" fill="url(#garr)" stroke="#929292" stroke-width="1"/></svg>
<svg style="left:283px;top:597px" width="17" height="17" viewBox="0 0 17 17"><path d="M0 16H17" stroke="#8c8c8c" stroke-width="1.6"/><path d="M8.5 14L16 7H12V1H5V7H1Z" fill="url(#garr)" stroke="#929292" stroke-width="1"/></svg>
<div class="a" style="left:312px;top:522px;width:10px;height:10px;border:1px solid #a8aaac;border-radius:2px;background:#e4e6e8"></div>
<svg style="left:313px;top:523px" width="8" height="8"><path d="M1 1L7 7M7 1L1 7" stroke="#555" stroke-width="1"/></svg>
<div class="a" style="left:312px;top:541px;width:10px;height:10px;border:1px solid #a8aaac;border-radius:2px;background:#e4e6e8"></div>
<div class="a" style="left:315px;top:544px;width:5px;height:5px;border:1px solid #888"></div>
<div class="t" style="left:310px;top:738px;transform:rotate(-90deg);transform-origin:0 0">Run</div>

<!-- OUTPUT PANEL -->
<div class="a" style="left:326px;top:517px;width:1017px;height:30px;background:linear-gradient(#f8f9fa,#eff1f2);border-bottom:1px solid #b9bbbd"></div>
<svg style="left:337px;top:527px" width="10" height="10"><path d="M.5 .5L9.5 9.5M9.5 .5L.5 9.5" stroke="#232627" stroke-width="1.2"/></svg>
<svg style="left:361px;top:525px" width="13" height="14" viewBox="0 0 13 14"><path d="M0 1H12M0 4H7M0 7H7M0 10H7M0 13H6" stroke="#232627" stroke-width="1.1"/><path d="M8 6Q12 6 12 9.5Q12 12.5 9 12.5" fill="none" stroke="#3daee9" stroke-width="1.3"/><path d="M9.5 11V14L8 12.5Z" fill="#3daee9"/></svg>
<svg style="left:386px;top:526px" width="12" height="12" viewBox="0 0 12 12"><path d="M0 2.5H12M0 9.5H12" stroke="#232627" stroke-width="1.1"/><circle cx="8.5" cy="2.5" r="1.8" fill="#232627"/><circle cx="3.5" cy="9.5" r="1.8" fill="#fff" stroke="#232627"/></svg>
<div class="a" style="left:408px;top:524px;width:1px;height:15px;background:#d0d2d4"></div>
<svg style="left:416px;top:524px" width="17" height="16" viewBox="0 0 17 16"><path d="M1 0V16" stroke="#2f6e10" stroke-width="2"/><g transform="translate(1.5 0) scale(.95 1)"><path d="M1 8L8.5 1V5H15V11H8.5V15Z" fill="#80c03a" stroke="#3a7c12" stroke-width="1"/><path d="M3 8L8 3.5V6.2H14V8Z" fill="#b8e878" opacity=".6"/></g></svg>
<svg style="left:441px;top:524px" width="16" height="16" viewBox="0 0 16 16"><path d="M1 8L8.5 1V5H15V11H8.5V15Z" fill="#80c03a" stroke="#3a7c12" stroke-width="1"/><path d="M3 8L8 3.5V6.2H14V8Z" fill="#b8e878" opacity=".6"/></svg>
<svg style="left:466px;top:524px" width="16" height="16" viewBox="0 0 16 16"><path d="M15 8L7.5 1V5H1V11H7.5V15Z" fill="#80c03a" stroke="#3a7c12" stroke-width="1"/><path d="M13 8L8 3.5V6.2H2V8Z" fill="#b8e878" opacity=".6"/></svg>
<svg style="left:491px;top:524px" width="17" height="16" viewBox="0 0 17 16"><g transform="scale(.95 1)"><path d="M15 8L7.5 1V5H1V11H7.5V15Z" fill="#80c03a" stroke="#3a7c12" stroke-width="1"/><path d="M13 8L8 3.5V6.2H2V8Z" fill="#b8e878" opacity=".6"/></g><path d="M16 0V16" stroke="#2f6e10" stroke-width="2"/></svg>
<svg style="left:517px;top:524px" width="14" height="16" viewBox="0 0 14 16"><rect x=".5" y=".5" width="13" height="15" fill="#fff" stroke="#666"/><rect x="2" y="2" width="10" height="12" fill="#9cb8dc"/><path d="M3 4h3M8 4h3M3 7h8M3 10h5" stroke="#6f8fbf"/><path d="M8.5 10.5h3M10 10.5v5M8.5 15.5h3" stroke="#000" stroke-width=".9"/></svg>
<svg style="left:541px;top:524px" width="16" height="16" viewBox="0 0 16 16"><path d="M.5 .5H10.5V11.5H.5Z" fill="#f4f4f4" stroke="#aaa"/><path d="M4.5 4.5H15.5V13L13 15.5H4.5Z" fill="#fafafa" stroke="#999"/><path d="M6.5 7.5h7M6.5 9.5h7M6.5 11.5h5" stroke="#aaa"/></svg>
<svg style="left:566px;top:526px" width="17" height="12" viewBox="0 0 17 12"><path d="M0 6L5 0H17V12H5Z" fill="#232627"/><path d="M8 3L12 9M12 3L8 9" stroke="#fff" stroke-width="1.5"/></svg>
<div class="a" style="left:590px;top:527px;width:1px;height:11px;background:#d0d2d4"></div>
<div class="a" style="left:594px;top:521px;width:20px;height:23px;background:#fff;border:1px solid #bcbebf;border-radius:3px"></div>
<div class="t" style="left:598px;top:524px;color:#7f8c8d">S</div>

<div class="a" style="left:326px;top:547px;width:1017px;height:28px;background:#eff0f1"></div>
<div class="a" style="left:327px;top:550px;width:45px;height:24px;background:linear-gradient(#ecedee,#e0e1e2);border:1px solid #bdbfc1;border-bottom:none;border-radius:3px 3px 0 0"></div>
<div class="a" style="left:373px;top:550px;width:45px;height:24px;background:linear-gradient(#ecedee,#e0e1e2);border:1px solid #bdbfc1;border-bottom:none;border-radius:3px 3px 0 0"></div>
<div class="a" style="left:419px;top:550px;width:45px;height:24px;background:linear-gradient(#ecedee,#e0e1e2);border:1px solid #bdbfc1;border-bottom:none;border-radius:3px 3px 0 0"></div>
<div class="a" style="left:465px;top:548px;width:45px;height:27px;background:#fcfcfc;border:1px solid #b0b2b4;border-bottom:none;border-radius:3px 3px 0 0"></div>
<div class="t" style="left:339px;top:554px">qt1</div>
<div class="t" style="left:385px;top:554px">qt1</div>
<div class="t" style="left:431px;top:554px">qt1</div>
<div class="t" style="left:477px;top:553px">qt1</div>
<svg style="left:1326px;top:558px" width="10" height="10"><path d="M.5 .5L9.5 9.5M9.5 .5L.5 9.5" stroke="#232627" stroke-width="1.3"/></svg>
<div class="a" style="left:326px;top:573px;width:1017px;height:1px;background:#b9bbbd"></div>
<div class="a" style="left:326px;top:574px;width:1017px;height:1px;background:#fbfbfb"></div>
<div class="a" style="left:326px;top:575px;width:1017px;height:166px;background:#fff;border:1px solid #b3b5b7;border-top-color:#a8aaac"></div>
<div class="a" style="left:466px;top:573px;width:43px;height:2px;background:#fcfcfc"></div>
<div class="t mono" style="left:331px;top:577px;color:#232627;letter-spacing:0.03px">/home/woot/projects/qt1/build/src&gt;</div>
<div class="a" style="left:327px;top:725px;width:1015px;height:15px;background:#fff;border-top:1px solid #c9cbcd"></div>
<div class="a" style="left:327px;top:725px;width:14px;height:15px;border-right:1px solid #d6d8da"></div>
<svg style="left:331px;top:729px" width="5" height="8"><path d="M4.5 0L0 4L4.5 8Z" fill="#777"/></svg>
<div class="a" style="left:1327px;top:725px;width:15px;height:15px;border-left:1px solid #d6d8da"></div>
<svg style="left:1332px;top:729px" width="5" height="8"><path d="M0 0L4.5 4L0 8Z" fill="#777"/></svg>

<!-- RIGHT SIDEBAR -->
<div class="a" style="left:1344px;top:108px;width:22px;height:634px;background:linear-gradient(90deg,#eceeef,#fbfbfc)"></div>
<div class="a" style="left:1342px;top:108px;width:2px;height:634px;background:#c3c5c7"></div>
<svg style="left:1349px;top:113px" width="12" height="12" viewBox="0 0 12 12"><rect x=".6" y=".6" width="10.8" height="10.8" fill="none" stroke="#232627" stroke-width="1.2"/><path d="M2.5 3L5 5L2.5 7M5.5 9H9" stroke="#232627" fill="none" stroke-width="1.1"/></svg>
<div class="t" style="left:1363px;top:129px;transform:rotate(90deg);transform-origin:0 0;letter-spacing:0.25px">External Scripts</div>

<!-- STATUS BAR -->
<div class="a" style="left:0;top:741px;width:1366px;height:27px;background:linear-gradient(#f3f4f5,#eceeef);border-bottom:1px solid #fff"></div><div class="a" style="left:0;top:766px;width:1366px;height:1px;background:#c6c8ca"></div>
<svg style="left:5px;top:748px" width="12" height="12" viewBox="0 0 12 12"><rect x=".6" y=".6" width="10.8" height="10.8" fill="none" stroke="#232627" stroke-width="1.2"/><path d="M3 3L4.5 4.5M4.5 3L3 4.5M7.5 3L9 4.5M9 3L7.5 4.5M2.5 10Q6 5 9.5 10" stroke="#232627" fill="none" stroke-width="1"/></svg>
<div class="t" style="left:22px;top:746px">Problems</div>
<div class="t" style="left:110px;top:746px">{}</div>
<div class="t" style="left:126px;top:746px;letter-spacing:0.2px">Code Browser</div>
<svg style="left:247px;top:748px" width="13" height="13" viewBox="0 0 13 13"><path d="M11.56 5.30L11.56 6.70L10.29 6.97L9.91 8.01L10.71 9.03L9.80 10.11L8.66 9.50L7.71 10.06L7.66 11.35L6.27 11.59L5.79 10.39L4.70 10.20L3.83 11.16L2.61 10.46L3.01 9.23L2.30 8.38L1.02 8.56L0.54 7.24L1.63 6.55L1.63 5.45L0.54 4.76L1.02 3.44L2.30 3.62L3.01 2.77L2.61 1.54L3.83 0.84L4.70 1.80L5.79 1.61L6.27 0.41L7.66 0.65L7.71 1.94L8.66 2.50L9.80 1.89L10.71 2.97L9.91 3.99L10.29 5.03Z" fill="none" stroke="#232627" stroke-width="1.2"/><circle cx="6" cy="6" r="1.6" fill="none" stroke="#232627" stroke-width="1.1"/></svg>
<div class="t" style="left:263px;top:746px">Build</div>
<div class="a" style="left:320px;top:743px;width:69px;height:23px;background:#e3e4e5;border:1px solid #b9bbbd;border-radius:3px"></div>
<svg style="left:323px;top:746px" width="17" height="17" viewBox="0 0 17 17"><g fill="#f4f4f4" stroke="#444" stroke-width=".75" stroke-linejoin="round" fill-rule="evenodd"><path d="M14.85 3.74L14.85 5.06L13.77 5.28L13.34 6.18L13.84 7.15L12.81 7.97L11.97 7.27L10.99 7.49L10.54 8.49L9.26 8.20L9.28 7.10L8.50 6.48L7.44 6.75L6.87 5.56L7.74 4.90L7.74 3.90L6.87 3.24L7.44 2.05L8.50 2.32L9.28 1.70L9.26 0.60L10.54 0.31L10.99 1.31L11.97 1.53L12.81 0.83L13.84 1.65L13.34 2.62L13.77 3.52ZM12.10 4.40A1.3 1.3 0 1 0 9.50 4.40A1.3 1.3 0 1 0 12.10 4.40Z"/><path d="M8.45 11.54L8.45 12.86L7.37 13.08L6.94 13.98L7.44 14.95L6.41 15.77L5.57 15.07L4.59 15.29L4.14 16.29L2.86 16.00L2.88 14.90L2.10 14.28L1.04 14.55L0.47 13.36L1.34 12.70L1.34 11.70L0.47 11.04L1.04 9.85L2.10 10.12L2.88 9.50L2.86 8.40L4.14 8.11L4.59 9.11L5.57 9.33L6.41 8.63L7.44 9.45L6.94 10.42L7.37 11.32ZM5.70 12.20A1.3 1.3 0 1 0 3.10 12.20A1.3 1.3 0 1 0 5.70 12.20Z"/><path d="M15.65 11.54L15.65 12.86L14.57 13.08L14.14 13.98L14.64 14.95L13.61 15.77L12.77 15.07L11.79 15.29L11.34 16.29L10.06 16.00L10.08 14.90L9.30 14.28L8.24 14.55L7.67 13.36L8.54 12.70L8.54 11.70L7.67 11.04L8.24 9.85L9.30 10.12L10.08 9.50L10.06 8.40L11.34 8.11L11.79 9.11L12.77 9.33L13.61 8.63L14.64 9.45L14.14 10.42L14.57 11.32ZM12.90 12.20A1.3 1.3 0 1 0 10.30 12.20A1.3 1.3 0 1 0 12.90 12.20Z"/></g></svg>
<div class="t" style="left:341px;top:746px">Run</div>

<!-- WTF WINDOW -->
<div class="a" style="left:604px;top:322px;width:310px;height:273px;border-radius:5px 5px 0 0;box-shadow:0 8px 20px rgba(0,0,0,0.3),0 0 5px rgba(0,0,0,0.15)"></div>
<div class="a" style="left:604px;top:322px;width:310px;height:273px;background:#f5f5f5;border:1px solid #5f5f5f;border-radius:5px 5px 2px 2px"></div>
<div class="a" style="left:605px;top:323px;width:308px;height:28px;background:#dbd7d4;border-radius:4px 4px 0 0"></div>
<div class="a" style="left:610px;top:328px;width:20px;height:18px;border:1px solid #9a9a9a;border-radius:3px;background:linear-gradient(#fdfdfd,#dfe3df)"></div>
<div class="a" style="left:611px;top:330px;width:18px;height:2px;background:#4f7fc2"></div>
<div class="t" style="left:714px;top:329px;font-weight:bold;color:#31363b;letter-spacing:0.6px">wtf</div>
<svg style="left:824px;top:332px" width="82" height="12"><path d="M1.5 8.5L5.5 4L9.5 8.5" stroke="#232627" stroke-width="2" fill="none"/><path d="M24 8.8H33" stroke="#232627" stroke-width="2.2"/><rect x="48" y="2" width="7.5" height="7.5" stroke="#232627" stroke-width="2" fill="none"/><path d="M71 1.5L78.5 9M78.5 1.5L71 9" stroke="#232627" stroke-width="2"/></svg>
<div class="a" style="left:609px;top:351px;width:300px;height:240px;background:#4682b4"></div>

<!-- DOCK -->
<div class="a" style="left:530px;top:719px;width:306px;height:49px;background:#f5f3f1;border:1px solid #aaa49e;border-bottom:none;box-shadow:0 -2px 6px rgba(0,0,0,0.08)"></div>
<div class="a" style="left:535px;top:724px;width:40px;height:40px;border-radius:4px;background:linear-gradient(#00a6dd 70%,#4b5b67 70%)"></div>
<div class="a" style="left:582px;top:727px;width:2px;height:35px;background:#8f8f8f"></div>
<div class="a" style="left:592px;top:726px;width:38px;height:36px;border-radius:4px;background:#d3d8db;box-shadow:0 1px 1px rgba(0,0,0,0.15)"></div>
<div class="a" style="left:595px;top:729px;width:32px;height:28px;border-radius:2px;background:#263238"></div>
<svg style="left:596px;top:731px" width="14" height="11"><path d="M1 1.2L5 4L1 6.8M7 9.5H12" stroke="#fff" stroke-width="1.6" fill="none"/></svg>
<div class="a" style="left:644px;top:726px;width:29px;height:36px;border-radius:3px;background:#00a6dd;box-shadow:0 1px 1px rgba(0,0,0,0.2)"></div>
<div class="a" style="left:644px;top:742px;width:29px;height:1px;background:#0b7fae"></div>
<div class="a" style="left:655px;top:733px;width:8px;height:3px;border-radius:1px;background:#aaa"></div>
<div class="a" style="left:655px;top:750px;width:8px;height:3px;border-radius:1px;background:#aaa"></div>
<svg style="left:686px;top:723px" width="42" height="42" viewBox="0 0 42 42"><defs><clipPath id="gc"><circle cx="21" cy="21" r="21"/></clipPath></defs><circle cx="21" cy="21" r="21" fill="#00a4dc"/><g clip-path="url(#gc)" fill="#6dcdf0"><path d="M1 13L7 6L12 4L16 7L18 12L15 15L12 13L10 15L13 18L17 17L19 20L14 23L9 22L3 25L0 22Z"/><path d="M15 0H26L24 8L21 11L18 6Z"/><path d="M28 8L35 7L41 13L42 20L39 24L42 28L37 35L33 39L31 34L30 28L27 25L26 22L29 20L34 21L33 18L29 18L27 16L31 14L33 15L31 11Z"/><path d="M21 28L24 30L22 35L20 33Z"/></g><path d="M19.7 17V38.5L15 33.5L10.5 41L7.5 39.5L12 32.5L1 32Z" fill="#f2f3f4"/></svg>
<div class="a" style="left:737px;top:726px;width:36px;height:36px;border-radius:4px;background:#d6dbde"></div>
<svg style="left:737px;top:726px" width="36" height="36" viewBox="0 0 36 36"><defs><linearGradient id="glens" x1="0" y1="0" x2="0" y2="1"><stop offset="0" stop-color="#e3f5fc"/><stop offset="1" stop-color="#2fb0e5"/></linearGradient></defs><g fill="#5bc8ef"><rect x="3" y="3" width="6" height="6"/><rect x="11" y="3" width="6" height="6"/><rect x="19" y="3" width="6" height="6"/><rect x="27" y="3" width="6" height="6"/><rect x="3" y="11" width="6" height="6"/><rect x="27" y="11" width="6" height="6"/><rect x="3" y="19" width="6" height="6"/><rect x="3" y="27" width="6" height="6"/><rect x="11" y="27" width="6" height="6"/></g><circle cx="15" cy="14.5" r="10" fill="url(#glens)" stroke="#1d2428" stroke-width="2"/><path d="M22.5 22L32 31" stroke="#1d2428" stroke-width="3.5" stroke-linecap="round"/><path d="M21.8 21.3L24.3 23.8" stroke="#d6b030" stroke-width="3.2"/></svg>
<div class="a" style="left:782px;top:727px;width:2px;height:35px;background:#8f8f8f"></div>
<svg style="left:791px;top:726px" width="39" height="34" viewBox="0 0 39 34"><path d="M1 2Q1 0 3 0H16L18 4H30Q32 4 32 6V30H1Z" fill="#8a8a8a"/><path d="M2 4H31V30H2Z" fill="#b5b5b5"/><path d="M2 8H31M2 10H31M2 12H31" stroke="#9a9a9a" stroke-width=".8"/><path d="M4 11H38L36 32Q36 34 34 34H3Q2 34 2 32Z" fill="#6f9fdc" stroke="#3c6cb0" stroke-width="1"/><path d="M5 13H36L35.5 18Q20 16 5 22Z" fill="#8fb8ea" opacity=".7"/></svg>

<!-- CURSOR -->
<svg style="left:952px;top:539px" width="14" height="20" viewBox="0 0 14 20"><path d="M.5 .5V16.5L4.5 13L7.5 19L10 17.8L7.3 12.3H12.3Z" fill="#fff" stroke="#000" stroke-width="1.1" stroke-linejoin="round"/></svg>
</body></html>
